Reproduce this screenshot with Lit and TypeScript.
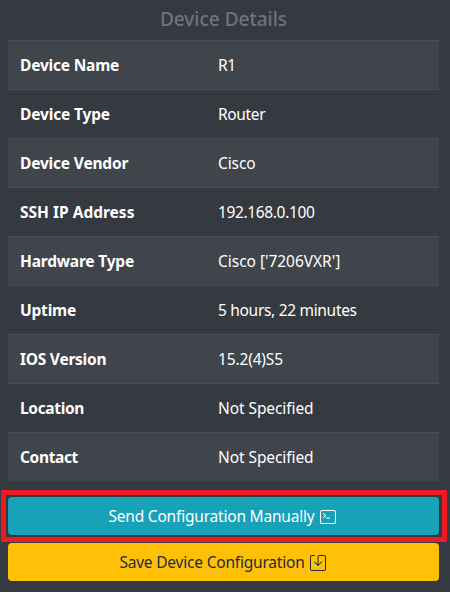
import { LitElement, html, css, svg } from "lit";
import { customElement } from "lit/decorators.js";

// label, value, and the tracking (px) of each
const rows: [string, string, number, number][] = [
  ["Device Name", "R1", -0.2, -0.3],
  ["Device Type", "Router", -0.15, -0.35],
  ["Device Vendor", "Cisco", -0.18, -0.1],
  ["SSH IP Address", "192.168.0.100", 0, -0.36],
  ["Hardware Type", "Cisco ['7206VXR']", -0.2, -0.03],
  ["Uptime", "5 hours, 22 minutes", -0.2, -0.31],
  ["IOS Version", "15.2(4)S5", -0.25, -0.15],
  ["Location", "Not Specified", -0.33, -0.08],
  ["Contact", "Not Specified", -0.35, -0.08],
];

const terminal = svg`<path d="M2 1a2 2 0 0 0-2 2v10a2 2 0 0 0 2 2h12a2 2 0 0 0 2-2V3a2 2 0 0 0-2-2H2zm12 1a1 1 0 0 1 1 1v10a1 1 0 0 1-1 1H2a1 1 0 0 1-1-1V3a1 1 0 0 1 1-1h12z"/><path d="M6 9a.5.5 0 0 1 .5-.5h3a.5.5 0 0 1 0 1h-3A.5.5 0 0 1 6 9zM3.146 4.146a.5.5 0 0 1 .708 0l2 2a.5.5 0 0 1 0 .708l-2 2a.5.5 0 1 1-.708-.708L4.793 6.5 3.146 4.854a.5.5 0 0 1 0-.708z"/>`;
const save = svg`<path d="M2 1a1 1 0 0 0-1 1v12a1 1 0 0 0 1 1h12a1 1 0 0 0 1-1V2a1 1 0 0 0-1-1H9.5a1 1 0 0 0-1 1v7.293l2.646-2.647a.5.5 0 0 1 .708.708l-3.5 3.5a.5.5 0 0 1-.708 0l-3.5-3.5a.5.5 0 1 1 .708-.708L7.5 9.293V2a2 2 0 0 1 2-2H14a2 2 0 0 1 2 2v12a2 2 0 0 1-2 2H2a2 2 0 0 1-2-2V2a2 2 0 0 1 2-2h2.5a.5.5 0 0 1 0 1H2z"/>`;

@customElement("app-root")
export class AppRoot extends LitElement {
  static styles = css`
    :host {
      display: block;
      box-sizing: border-box;
      height: 592px;
      padding: 0 11px 0 8px;
      overflow: hidden;
      background: #353940;
      color: #fff;
      font: 15.5px/24px "Noto Sans", sans-serif;
    }
    h5 {
      margin: 0;
      height: 40px;
      font-size: 19px;
      font-weight: 500;
      line-height: 38px;
      text-align: center;
      color: #6c757d;
    }
    .row {
      display: grid;
      grid-template-columns: 198px 1fr;
      box-sizing: border-box;
      height: 49px;
      padding: 12px;
      border-top: 1px solid #494d54;
      white-space: nowrap;
    }
    .row:nth-child(odd) { background: #40444b; }
    .label { font-weight: 700; }
    .highlight {
      margin: 9px -8px 0 -7px;
      padding: 2px 3px 2px 2px;
      border: 5px solid #ed1c24;
    }
    button {
      display: flex;
      align-items: center;
      justify-content: center;
      gap: 5px;
      box-sizing: border-box;
      width: 100%;
      height: 38px;
      padding: 0 2px 0 0;
      border: 0;
      border-radius: 4px;
      font: inherit;
      letter-spacing: -0.2px;
      white-space: nowrap;
    }
    .send { padding-right: 3px; background: #17a2b8; color: #fff; }
    .save { margin-top: 1px; background: #ffc107; color: #1f2d3d; }
    svg { width: 16px; height: 16px; margin-top: 2px; fill: currentColor; }
  `;

  render() {
    return html`
      <h5>Device Details</h5>
      <div class="table">
        ${rows.map(
          ([label, value, a, b]) => html`<div class="row">
            <span class="label" style="letter-spacing:${a}px">${label}</span>
            <span style="letter-spacing:${b}px">${value}</span>
          </div>`
        )}
      </div>
      <div class="highlight">
        <button class="send"><span>Send Configuration Manually</span><svg viewBox="0 0 16 16">${terminal}</svg></button>
      </div>
      <button class="save"><span>Save Device Configuration</span><svg viewBox="0 0 16 16">${save}</svg></button>
    `;
  }
}
